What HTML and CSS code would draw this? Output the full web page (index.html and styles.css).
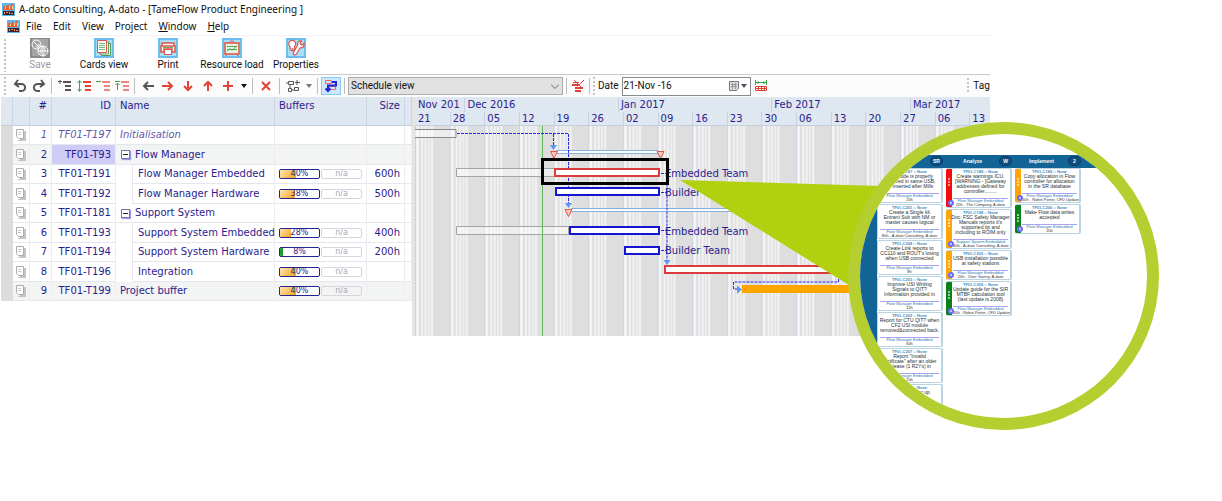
FILE: index.html
```html
<!DOCTYPE html>
<html lang="en">
<head>
<meta charset="utf-8">
<title>A-dato Consulting, A-dato - [TameFlow Product Engineering ]</title>
<link rel="stylesheet" href="styles.css">
</head>
<body>
<svg class="defs" aria-hidden="true">
  <symbol id="logo" viewBox="0 0 13 13"><path fill="#5db7ea" d="M0 0h13v13H0z"/><path fill="#f0602c" d="M1 3h2l1 2 1-3h2l1 3 1-4h2v6H1z"/><path fill="#ffd9a0" d="M3 4h1v2H3zM7 3h1v3H7zM10 3h1v3h-1z"/><path fill="#3a2432" d="M1 8h11v4H1z"/><path fill="#ff8a3c" d="M2 9h1v2H2zM4 9h2v1H4zM7 9h1v2H7zM9 10h2v1H9z"/></symbol>
  <symbol id="docs" viewBox="0 0 12 12"><path fill="#c4c4c4" d="M5 2h6v10H3v-1h2z"/><path fill="#fff" stroke="#adadad" d="M1.500.5h7v9h-5l-2-2z"/><path stroke="#c4c4c4" d="M3 3.500h3M3 5.500h3" fill="none"/></symbol>
  <symbol id="lines" viewBox="0 0 8 10"><path fill="none" stroke="currentColor" stroke-width="2" d="M0 1h8M2 5h6M2 9h6"/></symbol>
  <symbol id="drop" viewBox="0 0 6 4"><path fill="currentColor" d="M0 0h6L3 4z"/></symbol>
</svg>

<main class="app">
  <header class="titlebar"><svg class="logo"><use href="#logo"/></svg><h1>A-dato Consulting, A-dato - [TameFlow Product Engineering ]</h1></header>
  <nav class="menu">
    <svg class="logo"><use href="#logo"/></svg>
    <a href="#">File</a><a href="#">Edit</a><a href="#">View</a><a href="#">Project</a><a href="#"><u>W</u>indow</a><a href="#"><u>H</u>elp</a>
  </nav>

  <div class="ribbon">
    <span class="grip"></span>
    <button class="big" disabled>
      <svg viewBox="0 0 20 20"><path fill="#8b8b8b" d="M0 0h20v20H0z"/><path fill="#a5a5a5" d="M2 1h16v8L9 18H2z"/><g fill="none" stroke="#fff"><circle cx="6.500" cy="6.500" r="4.500"/><path d="m4 4 5 5M9 6v3H6"/><circle cx="13" cy="13" r="5"/><path d="M8 13h10M13 8v10M13 8c-3 3-3 7 0 10M13 8c3 3 3 7 0 10"/></g></svg>
      <span>Save</span></button>
    <button class="big">
      <svg viewBox="0 0 20 20"><path fill="#69bdf0" d="M0 0h20v20H0z"/><path fill="#a9ddf8" d="M2 2h16v16H2z"/><path fill="#fff" stroke="#56975b" d="M7.500 5.500h9v12h-9z"/><path fill="#fff" stroke="#56975b" d="M5.500 4h9v12h-9z"/><path fill="#fff" stroke="#d8584e" d="M3.500 2.500h9v12h-9z"/><path stroke="#79b878" d="M5 5.500h6M5 7.500h6M5 9.500h6M5 11.500h6"/></svg>
      <span>Cards view</span></button>
    <button class="big">
      <svg viewBox="0 0 20 20"><path fill="#69bdf0" d="M0 0h20v20H0z"/><path fill="#a9ddf8" d="M2 2h16v16H2z"/><path fill="#fff" stroke="#dc554b" stroke-width="1.500" d="M4 5h12v3H4zM3 8h14v6h-3v-3H6v3H3z"/><path fill="#fff" stroke="#dc554b" d="M6.500 11.500h7v5h-7z"/><path stroke="#66ad65" d="M5 9.500h10"/></svg>
      <span>Print</span></button>
    <button class="big">
      <svg viewBox="0 0 20 20"><path fill="#69bdf0" d="M0 0h20v20H0z"/><path fill="#a9ddf8" d="M2 2h16v16H2z"/><path fill="#e8f5e4" stroke="#dc554b" stroke-width="1.500" d="M3 5h14v11H3z"/><path fill="none" stroke="#dc554b" d="M8 5c0-3 4-3 4 0M5 16l-1 2M15 16l1 2"/><path fill="none" stroke="#55a45a" d="M5 8.500h10M5 11.500h10M5 13.500l3-3 2 2 5-5"/></svg>
      <span>Resource load</span></button>
    <button class="big">
      <svg viewBox="0 0 20 20"><path fill="#69bdf0" d="M0 0h20v20H0z"/><path fill="#a9ddf8" d="M2 2h16v16H2z"/><g fill="#fff" stroke="#dc554b" stroke-width="1.200"><path d="M18 5.500 15.500 7 14 5.500 15.500 3c-3-.5-4.500 1.500-3.700 4L7.500 14.500c-1 2 1.500 3.500 3 1.500L14 9.800c3 .4 4.500-1.800 4-4.300z"/><path d="M4 8.500a3.500 3.500 0 1 1 4.500 0V11H4z"/><path d="M4.500 12.500h3.500"/></g></svg>
      <span>Properties</span></button>
  </div>

  <div class="tools">
    <span class="grip"></span>
    <button class="tool dark" aria-label="Undo"><svg viewBox="0 0 14 14"><path d="M5 1 2 5l4 3M2 5h6c6 0 5 7 0 7H6"/></svg></button>
    <button class="tool dark" aria-label="Redo"><svg viewBox="0 0 14 14"><path d="m9 1 3 4-4 3M12 5H6c-6 0-5 7 0 7h2"/></svg></button>
    <span class="sep"></span>
    <button class="tool dark" aria-label="Insert row"><svg viewBox="0 0 14 14"><path class="thin" d="M0 2.500h4M2 1v4"/><use href="#lines" x="5" y="2" width="8" height="10"/></svg></button>
    <button class="tool red" aria-label="Expand rows"><svg viewBox="0 0 14 14"><path class="thin green" d="M2.500 2v10M.5 4l2-2.500 2 2.500M.5 10l2 2.500 2-2.500"/><use href="#lines" x="6" y="2" width="8" height="10"/></svg></button>
    <button class="tool pale" aria-label="Outdent"><svg viewBox="0 0 14 14"><path class="thin green" d="M0 2.500h5"/><use href="#lines" x="6" y="2" width="8" height="10"/></svg></button>
    <button class="tool pale" aria-label="Indent"><svg viewBox="0 0 14 14"><path class="thin green" d="M2.500 11V4M.5 6l2-2 2 2M0 2.500h5"/><use href="#lines" x="6" y="2" width="8" height="10"/></svg></button>
    <span class="sep"></span>
    <button class="tool wide dark" aria-label="Left"><svg viewBox="0 0 14 14"><path d="M13 7H3M7 3 3 7l4 4"/></svg></button>
    <button class="tool wide red" aria-label="Right"><svg viewBox="0 0 14 14"><path d="M1 7h10M7 3l4 4-4 4"/></svg></button>
    <button class="tool wide red" aria-label="Down"><svg viewBox="0 0 14 14"><path d="M7 2v9M3 7l4 4 4-4"/></svg></button>
    <button class="tool wide red" aria-label="Up"><svg viewBox="0 0 14 14"><path d="M7 12V3M3 7l4-4 4 4"/></svg></button>
    <button class="tool wide red" aria-label="Add"><svg viewBox="0 0 14 14"><path d="M7 2v10M2 7h10"/></svg></button>
    <button class="tool slim" aria-label="Add options"><svg class="drop"><use href="#drop"/></svg></button>
    <span class="sep"></span>
    <button class="tool wide red" aria-label="Delete"><svg viewBox="0 0 14 14"><path d="m3 3 8 8M11 3l-8 8"/></svg></button>
    <span class="sep"></span>
    <button class="tool wide dark" aria-label="Network"><svg viewBox="0 0 14 14"><path class="thin" d="M2.500 2.500h5v3h-5zM2.500 9.500h3v3h-3zM8.500 8.500h4v3h-4zM0 4h2M4 6v3M6 11h3M11 1v5M9 3.500h5"/></svg></button>
    <button class="tool slim" aria-label="Network options"><svg class="drop grey"><use href="#drop"/></svg></button>
    <span class="sep"></span>
    <button class="tool wide active" aria-pressed="true" aria-label="Show links"><svg viewBox="0 0 14 14"><path class="thin rose" d="M1.500 1.500h6v3h-6zM5.500 7.500h6v3h-6z"/><path class="blue" d="M8 3h4v3.500H4V11M1.500 9.500 4 12l2.500-2.500"/></svg></button>
    <span class="sep"></span>
    <span class="select"><select aria-label="View"><option>Schedule view</option></select><svg viewBox="0 0 8 5"><path d="m0 .5 4 4 4-4" fill="none" stroke="#666"/></svg></span>
    <span class="sep"></span>
    <button class="tool narrow red" aria-label="Clear"><svg viewBox="0 0 14 14"><path d="M1 6h8M4 9h8M4 12h6"/><path class="thin" d="M13 1 7 7M3 1l9 9M2 3.500h6"/></svg></button>
    <span class="sep"></span>
    <span class="grip"></span>
    <label for="date">Date</label>
    <span class="date"><input id="date" type="text" value="21-Nov -16"><button aria-label="Pick a date"><svg viewBox="0 0 19 10"><path fill="#ddd" stroke="#777" d="M.5.5h9v7l-2 2h-7z"/><path stroke="#999" d="M2 3.500h6M2 5.500h6M3.500 2v6M6.500 2v6"/><path fill="#4b5568" d="M12 3h6l-3 4z"/></svg></button></span>
    <button class="tool wide red" aria-label="Date range"><svg viewBox="0 0 14 14"><path class="thin green" d="M1.500 1v5M12.500 1v5M2 3.500h10M4 2v3M10 2v3"/><path class="thin" d="M1.500 7.500h11v4h-11zM4.500 7v5M7.500 7v5M10.500 7v5M1 9.500h12"/></svg></button>
    <span class="tag"><span class="grip"></span>Tag</span>
  </div>

  <section class="plan">
    <table class="tasks">
      <colgroup><col class="c-head"><col class="c-icon"><col class="c-num"><col class="c-id"><col class="c-name"><col class="c-buf"><col class="c-size"><col class="c-end"></colgroup>
      <thead><tr><th></th><th></th><th class="r">#</th><th class="r">ID</th><th>Name</th><th>Buffers</th><th class="r">Size</th><th></th></tr></thead>
      <tbody>
        <tr class="draft"><td></td><td><svg class="doc"><use href="#docs"/></svg></td><td class="r">1</td><td class="r">TF01-T197</td><td>Initialisation</td><td></td><td></td><td></td></tr>
        <tr class="shade"><td></td><td><svg class="doc"><use href="#docs"/></svg></td><td class="r">2</td><td class="r current">TF01-T93</td><td class="parent"><button class="fold" aria-label="Collapse Flow Manager"></button>Flow Manager</td><td></td><td></td><td></td></tr>
        <tr><td></td><td><svg class="doc"><use href="#docs"/></svg></td><td class="r">3</td><td class="r">TF01-T191</td><td class="child"><span>Flow Manager Embedded</span></td><td><div class="bufs"><span class="buf"><i style="width:40%"></i><b>40%</b></span><span class="buf na"><b>n/a</b></span></div></td><td class="r">600h</td><td></td></tr>
        <tr><td></td><td><svg class="doc"><use href="#docs"/></svg></td><td class="r">4</td><td class="r">TF01-T192</td><td class="child"><span>Flow Manager Hardware</span></td><td><div class="bufs"><span class="buf"><i style="width:38%"></i><b>38%</b></span><span class="buf na"><b>n/a</b></span></div></td><td class="r">500h</td><td></td></tr>
        <tr><td></td><td><svg class="doc"><use href="#docs"/></svg></td><td class="r">5</td><td class="r">TF01-T181</td><td class="parent"><button class="fold" aria-label="Collapse Support System"></button>Support System</td><td></td><td></td><td></td></tr>
        <tr><td></td><td><svg class="doc"><use href="#docs"/></svg></td><td class="r">6</td><td class="r">TF01-T193</td><td class="child"><span>Support System Embedded</span></td><td><div class="bufs"><span class="buf"><i style="width:28%"></i><b>28%</b></span><span class="buf na"><b>n/a</b></span></div></td><td class="r">400h</td><td></td></tr>
        <tr><td></td><td><svg class="doc"><use href="#docs"/></svg></td><td class="r">7</td><td class="r">TF01-T194</td><td class="child"><span>Support System Hardware</span></td><td><div class="bufs"><span class="buf low"><i style="width:8%"></i><b>8%</b></span><span class="buf na"><b>n/a</b></span></div></td><td class="r">200h</td><td></td></tr>
        <tr><td></td><td><svg class="doc"><use href="#docs"/></svg></td><td class="r">8</td><td class="r">TF01-T196</td><td class="child"><span>Integration</span></td><td><div class="bufs"><span class="buf"><i style="width:40%"></i><b>40%</b></span><span class="buf na"><b>n/a</b></span></div></td><td></td><td></td></tr>
        <tr class="shade"><td></td><td><svg class="doc"><use href="#docs"/></svg></td><td class="r">9</td><td class="r">TF01-T199</td><td>Project buffer</td><td><div class="bufs"><span class="buf"><i style="width:40%"></i><b>40%</b></span><span class="buf na"><b>n/a</b></span></div></td><td></td><td></td></tr>
      </tbody>
    </table>

    <div class="gantt">
      <div class="scale">
        <div class="m d10">Nov 201</div><div class="m d31">Dec 2016</div><div class="m d31">Jan 2017</div><div class="m d28">Feb 2017</div><div class="m d19">Mar 2017</div>
        <div class="w">21</div><div class="w">28</div><div class="w">05</div><div class="w">12</div><div class="w">19</div><div class="w">26</div><div class="w">02</div><div class="w">09</div><div class="w">16</div><div class="w">23</div><div class="w">30</div><div class="w">06</div><div class="w">13</div><div class="w">20</div><div class="w">27</div><div class="w">06</div><div class="w">13</div>
      </div>
      <svg class="chart" role="img" aria-label="Project schedule">
        <defs>
          <pattern id="week" width="34.650" height="4" patternUnits="userSpaceOnUse">
            <path fill="#dedede" d="M0 0h35v4H0z"/><path fill="#f4f4f4" d="M1 0h3v4H1zM6 0h2v4H6zM9.500 0h2v4h-2zM13 0h1.500v4H13zM16 0h2v4h-2z"/><path fill="#c3cfe3" d="M0 0h1v3H0z"/>
          </pattern>
        </defs>
        <rect width="100%" height="100%" fill="url(#week)"/>
        <g transform="translate(-415 -126)">
          <g fill="#fff" fill-opacity=".45" stroke="#a4a4a4">
            <path stroke="#888" d="M414 129.500h42v8h-42z"/><path d="M456.500 168.500h98v8h-98zM456.500 226.500h112v8h-112z"/>
          </g>
          <path fill="#fff" stroke="#86aede" d="M556 150.500h102v3H556zM571 208.500h190v3H571z"/>
          <path stroke="#5cb85c" d="M542.500 126v211"/>
          <g fill="none" stroke="#2a2af0" stroke-dasharray="3 1">
            <path d="M457 133.500h111.500V203M553.500 134v12M661 173.500h6V260M661 192.500h6M661 230.500h6M661 250.500h6M838.500 275v7h-105v7h4"/>
          </g>
          <path fill="#5c98f0" d="M550 145h7l-3.500 5zM565 203h7l-3.500 5zM663.500 260h7l-3.500 5zM737 285.500v8l5-4z"/>
          <path fill="#fbc9bd" stroke="#df5850" d="M550.500 151.500h7l-3.500 7zM657 151.500h7l-3.500 7zM565 209.500h7l-3.500 7z"/>
          <path fill="#fff" stroke="#dc3c3c" stroke-width="2" d="M555 169h104v7H555zM665 266h210v7H665z"/>
          <path fill="#fff" stroke="#1414d2" stroke-width="2" d="M556 188h103v7H556zM570 227h89v7h-89zM625 247h34v7h-34z"/>
          <path fill="#ffa500" d="M742 285h130v8H742z"/>
          <g class="names"><text x="665" y="177">Embedded Team</text><text x="665" y="196">Builder Team</text><text x="665" y="235">Embedded Team</text><text x="665" y="254">Builder Team</text></g>
          <path fill="none" stroke="#000" stroke-width="3" d="M542.500 159.500h125v24h-125z"/>
        </g>
      </svg>
    </div>
  </section>
</main>

<aside class="callout">
  <svg class="beam" viewBox="0 0 200 110"><path fill="#b0d010" d="m0 1 200 6-28 101z"/></svg>
  <div class="lens">
    <div class="board">
      <div class="lane first">
        <div class="lane-head"><span></span><em>SR</em></div>
        <article class="card"><h3>TF01-C187 :: None</h3><p>This Node is properly<br>prepared in same USB,<br>be inserted after Mills</p><footer>Flow Manager Embedded<small>20h</small></footer></article>
        <article class="card"><h3>TF01-C201 :: None</h3><p>Create a Single kit<br>Entrant Sub with NM or<br>master causes logical</p><footer>Flow Manager Embedded<small>80h - A-dato Consulting, A-dato</small></footer></article>
        <article class="card"><h3>TF01-C208 :: None</h3><p>Create Link reports to<br>CC110 and ROUT's losing<br>when USB connected</p><footer>Flow Manager Embedded<small>8h</small></footer></article>
        <article class="card"><h3>TF01-C203 :: None</h3><p>Improve USI Writing<br>Signals to QIT?<br>Information provided in</p><footer>Flow Manager Embedded<small>12h</small></footer></article>
        <article class="card"><h3>TF01-C202 :: None</h3><p>Report for CTU QIT? when<br>CF2 USI module<br>removed&amp;connected back.</p><footer>Flow Manager Embedded<small>60h</small></footer></article>
        <article class="card"><h3>TF01-C207 :: None</h3><p>Report "Invalid<br>certificate" after an older<br>release (1 R2Ys) in</p><footer>Flow Manager Embedded<small>20h</small></footer></article>
        <article class="card"><h3>TF01-C210 :: None</h3><p>Improve Power up<br>for the</p></article>
      </div>
      <div class="lane">
        <div class="lane-head"><span>Analyze</span><em>W</em></div>
        <article class="card flag red-flag tall"><h3>TF01-C188 :: None</h3><p>Create warnings ICU.<br>[WARNING - ]Gateway<br>addresses defined for<br>controller.........</p><footer>Flow Manager Embedded<small>20h - The Company, A-dato</small></footer></article>
        <article class="card flag amber-flag tall"><h3>TF01-C198 :: None</h3><p>Doc: FSC Safety Manager<br>Manuals reports it's<br>supported tip and<br>including to ROIM only</p><footer>Support System Embedded<small>40h - A-dato Consulting, A-dato</small></footer></article>
        <article class="card flag amber-flag low-card"><h3>TF01-C205 :: None</h3><p>USB installation possible<br>at safety stations</p><footer>Flow Manager Embedded<small>20h - Over Gantry, A-dato</small></footer></article>
        <article class="card flag green-flag"><h3>TF01-C209 :: None</h3><p>Update guide for the SIR<br>MTBF calculation tool<br>(last update is 2008)</p><footer>Flow Manager Embedded<small>40h - Robin Porter, CFD Update</small></footer></article>
      </div>
      <div class="lane">
        <div class="lane-head"><span>Implement</span><em>2</em></div>
        <article class="card flag amber-flag"><h3>TF01-C189 :: None</h3><p>Copy allocation in Flow<br>controller for allocation<br>in the SR database</p><footer>Flow Manager Embedded<small>20h - Robin Porter, CFD Update</small></footer></article>
        <article class="card flag green-flag low-card"><h3>TF01-C206 :: None</h3><p>Make Flow data writes<br>accepted</p><footer>Flow Manager Embedded<small>20h</small></footer></article>
      </div>
    </div>
  </div>
</aside>
</body>
</html>
```
FILE: styles.css
```css
*, *::before, *::after { box-sizing: border-box; }
body { margin: 0; background: #fff; font: 10px/14px "Noto Sans", "Open Sans", sans-serif; color: #111; }
button, input, select { font: inherit; color: inherit; }
button { border: 0; padding: 0; background: none; }
svg { display: block; }
.defs { position: absolute; width: 0; height: 0; }
.app { width: 81vw; padding-top: 1px; }

.titlebar { display: flex; align-items: center; gap: 4px; height: 16px; padding-left: 2px; }
.titlebar h1 { margin: 0; font-size: 10px; font-weight: 400; white-space: nowrap; }
.logo { width: 13px; height: 13px; }
.menu { display: flex; align-items: center; height: 19px; padding-left: 7px; border-bottom: 1px solid #f3f3f3; }
.menu a { margin-right: 11px; color: #111; text-decoration: none; }
.menu .logo { margin-right: 6px; }

.grip { width: 2px; align-self: stretch; margin: 2px 0; background: repeating-linear-gradient(#c4c4c4 0 2px, transparent 2px 4px); }
.ribbon { display: flex; height: 39px; padding: 1px 4px 0; border-bottom: 1px solid #c9c9c9; font-family: Roboto, sans-serif; }
.big { width: 64px; display: flex; flex-direction: column; align-items: center; white-space: nowrap; }
.ribbon .grip { margin-right: 2px; }
.big svg { width: 20px; height: 20px; margin-top: 1px; }
.big:disabled { color: #999; }

.tools { display: flex; align-items: center; height: 22px; padding-left: 4px; overflow: hidden; background: #fcfcfc; font-family: Roboto, sans-serif; }
.tools > * { flex: none; }
.tools > .grip:first-child { margin-right: 4px; }
.tool { width: 19px; height: 18px; display: flex; align-items: center; justify-content: center; }
.tool svg { width: 14px; height: 14px; fill: none; stroke: currentColor; stroke-width: 2; }
.tool .thin { stroke-width: 1; }
.tool .green { stroke: #3da548; }
.tool .rose { stroke: #e66; }
.tool .blue { stroke: #2222d8; }
.tool .drop { width: 6px; height: 4px; stroke: none; }
.tool .grey { color: #777; }
.wide { width: 20px; }
.narrow { width: 16px; }
.slim { width: 11px; }
.dark { color: #555; }
.red { color: #e04338; }
.pale { color: #e98880; }
.active { background: #cce6fb; border: 1px solid #8cc6f2; }
.sep { width: 1px; height: 16px; margin: 0 3px; background: #bdbdbd; }
.select { display: grid; width: 215px; height: 18px; align-items: center; }
.select > * { grid-area: 1 / 1; }
.select select { width: 100%; height: 18px; padding: 0 2px; appearance: none; border: 1px solid #adadad; border-radius: 0; background: #e1e1e1; }
.select svg { width: 8px; height: 5px; justify-self: end; margin-right: 4px; pointer-events: none; }
.tools label { margin: 0 3px; }
.date { display: flex; align-items: center; width: 129px; height: 19px; border: 1px solid #8a8a8a; background: #fff; }
.date input { flex: 1; min-width: 0; border: 0; padding: 0 1px; outline: 0; background: none; }
.date svg { width: 19px; height: 10px; margin-right: 2px; }
.tools .tag { display: flex; align-items: center; gap: 4px; margin-left: auto; height: 20px; }

.plan { display: flex; align-items: flex-start; padding-left: 1px; font: 10px/12px "DejaVu Sans", sans-serif; color: #2b1d8e; }
.tasks { flex: none; width: 411px; table-layout: fixed; border-collapse: separate; border-spacing: 0; }
.c-head { width: 12px; } .c-icon { width: 17px; } .c-num { width: 22px; } .c-id { width: 64px; }
.c-name { width: 159px; } .c-buf { width: 92px; } .c-size { width: 38px; } .c-end { width: 7px; }
.tasks th { height: 29px; padding: 3px 4px; vertical-align: top; text-align: left; font-weight: 400; background: #dfe7f0; border-right: 1px solid #cbd6e4; border-bottom: 1px solid #c2cfdf; }
.tasks td { height: 19px; padding: 0 4px; white-space: nowrap; border-right: 1px solid #ececf2; border-bottom: 1px solid #e6e6ee; }
.tasks tbody tr:nth-child(even) td { height: 20px; }
.tasks .r { text-align: right; }
.tasks td:first-child { background: #dcdcdc; border-color: #dcdcdc; }
.tasks td:nth-child(2) { padding: 0 2px; }
.doc { width: 12px; height: 12px; }
.draft { font-style: italic; color: #5f58ad; }
.shade td:nth-child(n+2) { background: #f3f4f4; }
.tasks .shade td.current { background: #cfccf6; }
.tasks td.child { padding: 0 0 0 16px; border-bottom: 0; }
.child span { display: flex; align-items: center; height: 100%; min-height: 19px; padding-left: 5px; border-left: 1px solid #e6e6ee; border-bottom: 1px solid #e6e6ee; }
.fold { display: inline-block; vertical-align: middle; width: 9px; height: 9px; margin: 0 5px 0 1px; border: 1px solid #77779f; background: linear-gradient(#222, #222) center / 5px 1px no-repeat #fff; box-shadow: 1px 1px 1px #9a9af0; }
.bufs { display: flex; gap: 1px; }
.buf { display: grid; width: 41px; height: 10px; border: 1px solid #24248f; border-radius: 2px; background: #fff; font-size: 8px; line-height: 8px; overflow: hidden; }
.buf > * { grid-area: 1 / 1; }
.buf i { background: linear-gradient(135deg, #ffe6b5, #f6a21c); }
.buf.low i { background: #1f9d2c; }
.buf b { font-weight: 400; text-align: center; z-index: 1; }
.buf.na { border-color: #d5d5da; background: none; color: #a9a9b4; }

.gantt { flex: 1; min-width: 0; overflow: hidden; border-left: 3px solid #e4e4e4; }
.scale { display: grid; grid-template-columns: repeat(119, 1fr); width: 589px; height: 29px; padding-top: 1px; background: #dfe7f0; border-bottom: 1px solid #c2cfdf; }
.m, .w { min-width: 0; white-space: nowrap; padding-left: 2px; border-left: 1px solid #c5d2e2; line-height: 13px; }
.m:first-child, .m:first-child ~ .w:nth-child(6) { border-left-color: transparent; }
.d10 { grid-column: span 10; } .d31 { grid-column: span 31; } .d28 { grid-column: span 28; } .d19 { grid-column: span 19; }
.w { grid-column: span 7; }
.chart { width: 100%; height: 210px; }
.names { font: 10px "DejaVu Sans", sans-serif; fill: #2b1d8e; }

.callout { position: absolute; left: 680px; top: 122px; width: 479px; height: 308px; }
.beam { position: absolute; left: 0; top: 57px; width: 200px; height: 110px; }
.lens { position: absolute; right: 0; top: 0; width: 311px; height: 308px; border: 12px solid #b4cf2f; border-radius: 50%; overflow: hidden; background: #fff; }
.board { display: flex; gap: 3px; padding-top: 21px; height: 284px; background: linear-gradient(#126496, #126496) 0 21px / 300px 13px no-repeat, linear-gradient(#126496, #126496) 0 21px / 17px 280px no-repeat; font: 5px/5px "Liberation Sans", sans-serif; }
.lane { flex: none; width: 66px; display: flex; flex-direction: column; gap: 1px; }
.lane.first { margin-left: 17px; }
.lane-head { flex: none; display: flex; align-items: center; height: 12px; color: #fff; font-weight: 700; }
.lane-head span { flex: 1; text-align: center; }
.lane-head em { width: 13px; height: 10px; border: 1px solid #0a3c66; border-radius: 5px; background: #0e4f80; font-style: normal; line-height: 8px; text-align: center; }
.card { position: relative; flex: none; display: flex; flex-direction: column; height: 35px; overflow: hidden; border: 1px solid #b9d3e2; border-right-width: 2px; border-radius: 2px; background: #fff; color: #1d3236; text-align: center; white-space: nowrap; }
.card h3 { margin: 0; font-size: 4px; line-height: 5px; font-weight: 700; color: #3f8cc0; }
.card p { flex: 1; margin: 0; }
.card footer { margin: 0 2px; border-top: 1px solid #a9a4f2; font-size: 4px; line-height: 4px; color: #2f7cb0; }
.card small { display: block; font-size: 4px; line-height: 4px; color: #333; }
.tall { height: 40px; }
.low-card { height: 30px; }
.flag { padding-left: 5px; border-left: 0; }
.flag::before { content: ""; position: absolute; left: 2px; top: 9px; width: 2px; height: 8px; background: repeating-linear-gradient(#fff9 0 2px, transparent 2px 3px); }
.flag::after { content: ""; position: absolute; left: 2px; bottom: 1px; width: 6px; height: 6px; border: 2px solid #6c6cf4; border-radius: 50%; background: #dcdcff; }
.red-flag { background: linear-gradient(90deg, #f50d0d 6px, #fff 6px); }
.amber-flag { background: linear-gradient(90deg, #ffa50a 6px, #fff 6px); }
.green-flag { background: linear-gradient(90deg, #0a8219 6px, #fff 6px); }
```
